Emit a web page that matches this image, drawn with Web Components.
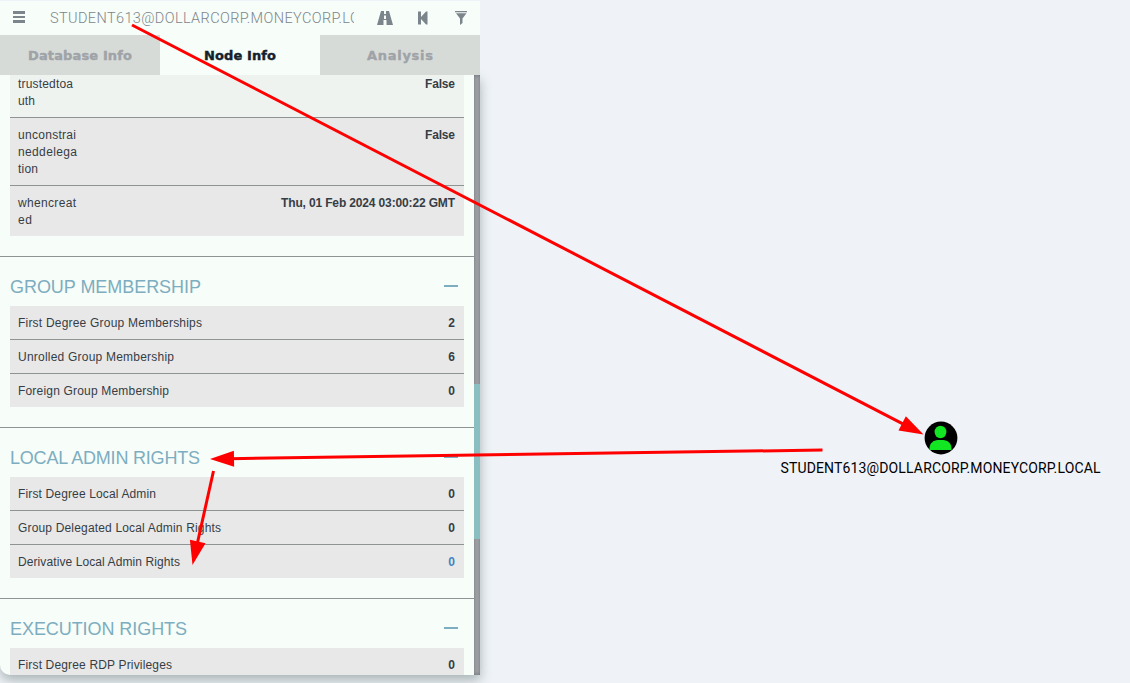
<!DOCTYPE html>
<html lang="en"><head><meta charset="utf-8"><title>Node Info</title>
<style>html,body{margin:0;height:683px;overflow:hidden;background:#eff3f8}</style></head>
<body><graph-app></graph-app>
<script>
const define=(name,html,setup)=>customElements.define(name,class extends HTMLElement{
  connectedCallback(){
    if(this.shadowRoot)return;
    const t=document.createElement('template');
    t.innerHTML=typeof html==='function'?html(this):html;
    this.attachShadow({mode:'open'}).append(t.content.cloneNode(true));
    if(setup)setup(this);
  }
});
// A line of text whose tracking is adjusted to an intended width.
define('fit-text','<style>:host{display:inline-block;white-space:nowrap}span{display:inline-block;white-space:pre}</style><span><slot></slot></span>',el=>{
  const s=el.shadowRoot.querySelector('span'),w=+el.getAttribute('w'),n=el.textContent.length;
  s.style.letterSpacing='0px';
  const sp=(w-s.getBoundingClientRect().width)/(n-1);
  s.style.letterSpacing=sp+'px';
  s.style.marginRight=-sp+'px';
});
define('search-bar',`<style>
:host{display:flex;height:34px;align-items:center;background:#f7fdf8;color:#7d858c;box-sizing:border-box;font:300 14.500px/36px Roboto,"Liberation Sans",sans-serif}
.menu{margin-left:13px;width:12px;flex:none;margin-top:-2px}
.q{margin-left:25px;width:304px;overflow:hidden;height:34px;flex:none}
svg{display:block;fill:#7d858c}.road{margin-left:23px}.back{margin-left:25px}.filter{margin-left:27px}
</style>
<svg class="menu" width="12" height="12" shape-rendering="crispEdges"><path d="M0 0h12v3H0zM0 5h12v2H0zM0 9h12v3H0z"/></svg>
<div class="q"><fit-text w="337">STUDENT613@DOLLARCORP.MONEYCORP.LOCAL</fit-text></div>
<svg class="road" width="16" height="14"><path d="M4 0h3v3h2V0h3l4 14H9.500V9h-3v5H0zM7 4.500V8h2V4.500z" fill-rule="evenodd"/></svg>
<svg class="back" width="10" height="14"><path d="M0 0.500h3v5.500L8 .5h1.500v13H8L3 8v5.500H0z"/></svg>
<svg class="filter" width="12" height="14"><path d="M0 0h12v1.200H0zM1 2.200h10.500L7.500 7.500V12L5 14V7.500z"/></svg>`);
define('tab-item',`<style>
:host{display:flex;flex:1;align-items:center;justify-content:center;background:#d7dbd8;color:#9fa3a8;font:900 13px/40px "DejaVu Sans",sans-serif;-webkit-text-stroke:.4px currentColor;padding-top:1px;box-sizing:border-box}
:host([active]){background:#f7fdf8;color:#14202c}</style><slot></slot>`);
define('prop-row',`<style>
:host{display:flex;justify-content:space-between;padding:9px 9px 7px 8px;background:#e8e8e8;border-bottom:1px solid #8e9493;color:#363d45;font:12px/17px "Liberation Sans",Arial,sans-serif}
:host(:last-child){border-bottom:0}
:host([top]){padding-top:1px;background:#eff3f0}
.n{display:flex;flex-direction:column;align-items:flex-start}
.v{font-weight:700}:host([link]) .v{color:#4284c1}
</style><div class="n"><slot></slot></div><div class="v"><slot name="v"></slot></div>`);
define('info-section',`<style>
:host{display:block;border-top:1px solid #8e9493;margin-top:20px;padding:0 10px}
header{display:flex;justify-content:space-between;align-items:center;height:49px;color:#7dadc0;font:18px/20px "Liberation Sans",Arial,sans-serif}
header slot{display:block;padding-top:11px}
i{display:block;width:14px;height:2px;background:#7dadc0;margin:9px 6px 0 0}
</style><header><slot name="title"></slot><i></i></header><slot></slot>`);
define('scroll-track',`<style>
:host{display:flex;flex-direction:column;width:6px;flex:none;background:#a5a7ab;box-shadow:inset 0 0 4px #6b6e75}
i{display:block;height:155px;margin-top:309px;background:#8abfc1}</style><i></i>`);
const row=(n,w,v,a='')=>`<prop-row ${a}><fit-text w="${w}">${n}</fit-text><fit-text slot="v" w="7">${v}</fit-text></prop-row>`;
define('info-panel',`<style>
:host{display:flex;flex-direction:column;width:480px;height:674px;margin-top:1px}
search-bar,nav{position:relative;z-index:1}
nav{display:flex;height:40px;flex:none}
.body{display:flex;height:600px;background:#f7fdf8;border-radius:0 0 0 10px;overflow:hidden;box-shadow:0 5px 12px rgba(60,80,75,.4)}
.content{width:474px;overflow:hidden}.props{padding:0 10px}
</style>
<search-bar></search-bar>
<nav><tab-item><fit-text w="104">Database Info</fit-text></tab-item><tab-item active><fit-text w="72">Node Info</fit-text></tab-item><tab-item><fit-text w="66">Analysis</fit-text></tab-item></nav>
<div class="body"><div class="content">
<div class="props">
<prop-row top><fit-text w="55">trustedtoa</fit-text><fit-text w="17">uth</fit-text><fit-text slot="v" w="30">False</fit-text></prop-row>
<prop-row><fit-text w="58">unconstrai</fit-text><fit-text w="59">neddelega</fit-text><fit-text w="20">tion</fit-text><fit-text slot="v" w="30">False</fit-text></prop-row>
<prop-row><fit-text w="58">whencreat</fit-text><fit-text w="14">ed</fit-text><fit-text slot="v" w="174">Thu, 01 Feb 2024 03:00:22 GMT</fit-text></prop-row>
</div>
<info-section><fit-text slot="title" w="191">GROUP MEMBERSHIP</fit-text>${row('First Degree Group Memberships',184,2)}${row('Unrolled Group Membership',156,6)}${row('Foreign Group Membership',151,0)}</info-section>
<info-section><fit-text slot="title" w="190">LOCAL ADMIN RIGHTS</fit-text>${row('First Degree Local Admin',138,0)}${row('Group Delegated Local Admin Rights',203,0)}${row('Derivative Local Admin Rights',162,0,'link')}</info-section>
<info-section><fit-text slot="title" w="177">EXECUTION RIGHTS</fit-text>${row('First Degree RDP Privileges',154,0)}</info-section>
</div><scroll-track></scroll-track></div>`);
define('user-node',`<style>
:host{position:absolute;left:780px;top:421px;width:321px;display:flex;flex-direction:column;align-items:center;color:#000;font:14px/20px Roboto,sans-serif}
svg{display:block}fit-text{margin-top:3px}</style>
<svg width="34" height="34"><circle cx="17" cy="17" r="16.400"/><g fill="#12e622"><ellipse cx="16.500" cy="11" rx="5.900" ry="6.200"/><path d="M5.500 29v-1.500c0-5 3.800-8.500 8.500-8.500h5c4.700 0 8.500 3.500 8.500 8.500v1.500z"/></g></svg>
<fit-text w="320">STUDENT613@DOLLARCORP.MONEYCORP.LOCAL</fit-text>`);
// Annotation arrows, each given by its tail and tip.
define('arrow-layer',()=>{
  const arrows=[[132,25,923.5,434.5],[822.5,450,210,459],[213.500,471,192.500,565]];
  return `<style>:host{position:absolute;inset:0;z-index:5;pointer-events:none}svg{display:block}</style><svg width="1130" height="683" fill="red" stroke="red">`+arrows.map(([x,y,a,b])=>{
    const l=Math.hypot(a-x,b-y),r=Math.atan2(b-y,a-x)*180/Math.PI;
    return `<g transform="translate(${x} ${y}) rotate(${r})"><path d="M0 0H${l-20}" stroke-width="3"/><path stroke="none" d="M${l} 0l-24 -8v16z"/></g>`;
  }).join('')+'</svg>';
});
define('graph-app',`<style>:host{display:flow-root;position:relative;width:1130px;height:683px;overflow:hidden;background:#eff3f8}</style><info-panel></info-panel><user-node></user-node><arrow-layer></arrow-layer>`);
</script></body></html>
